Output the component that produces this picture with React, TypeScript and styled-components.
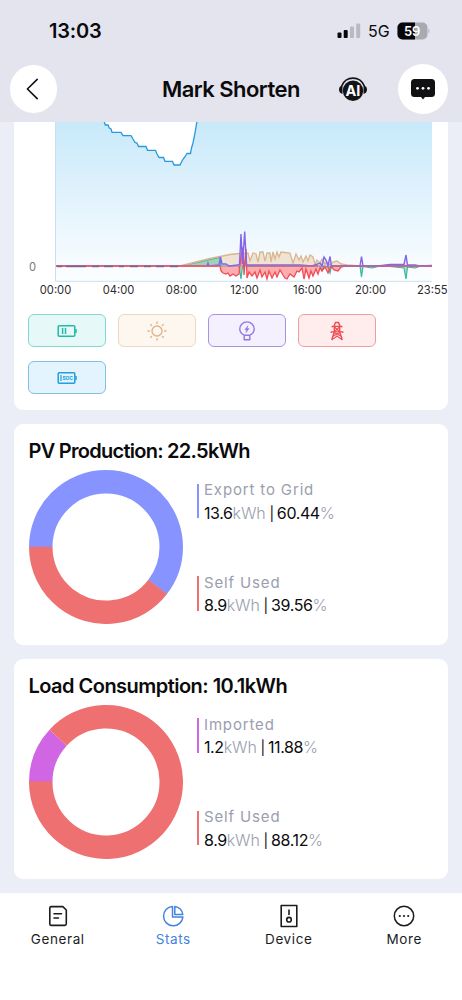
import React from "react";
import styled, { createGlobalStyle } from "styled-components";

const GlobalStyle = createGlobalStyle`
  * { box-sizing: border-box; }
  body {
    margin: 0;
    background: #ebeef6;
    font-family: Inter, "Liberation Sans", sans-serif;
    color: #0b0b0d;
  }
`;

const Screen = styled.div`
  width: 462px;
  height: 1000px;
  display: flex;
  flex-direction: column;
  overflow: hidden;
  background: #ebeef7;
`;

const TopArea = styled.header`
  height: 122px;
  flex: none;
  background: #e4e4ee;
`;

const StatusBar = styled.div`
  height: 61px;
  display: flex;
  align-items: center;
  justify-content: space-between;
  padding: 1px 31px 0 49px;
`;

const Clock = styled.span`
  font-size: 20px;
  font-weight: 600;
  letter-spacing: -0.2px;
`;

const StatusIcons = styled.div`
  display: flex;
  align-items: center;
`;

const Network = styled.span`
  font-size: 16px;
  width: 36px;
  padding-left: 7px;
  font-weight: 400;
  letter-spacing: -0.1px;
`;

const NavBar = styled.div`
  height: 56px;
  display: grid;
  grid-template-columns: 48px 1fr 30px 50px;
  align-items: center;
  padding: 0 14px 0 9.5px;
`;

const RoundButton = styled.button<{ $size: number }>`
  width: ${(p) => p.$size}px;
  height: ${(p) => p.$size}px;
  border: 0;
  padding: 0;
  border-radius: 50%;
  background: #fff;
  display: flex;
  align-items: center;
  justify-content: center;
`;

const PageTitle = styled.h1`
  margin: 0;
  padding-left: 104.5px;
  font-size: 22px;
  line-height: 28px;
  font-weight: 600;
  letter-spacing: -0.55px;
  white-space: nowrap;
`;

const Assistant = styled.span`
  display: flex;
  margin-left: -30px;
`;

const Content = styled.main`
  flex: 1;
  min-height: 0;
  padding: 0 14px;
  display: flex;
  flex-direction: column;
  gap: 14px;
`;

const ChartCard = styled.section`
  height: 288px;
  background: #fff;
  border-radius: 0 0 9px 9px;
  flex: none;
`;

const ChartSvg = styled.svg`
  display: block;
`;

const Chips = styled.div`
  display: grid;
  grid-template-columns: repeat(4, 78px);
  gap: 14px 12px;
  padding: 14px 0 0 14.4px;
`;

const Chip = styled.button<{ $line: string; $fill: string }>`
  height: 33px;
  padding: 0;
  border: 1px solid ${(p) => p.$line};
  background: ${(p) => p.$fill};
  border-radius: 6px;
  display: flex;
  align-items: center;
  justify-content: center;
`;

const Card = styled.section`
  height: 220.5px;
  flex: none;
  background: #fff;
  border-radius: 9px;
  padding: 14px 14px 0 14.5px;
`;

const CardTitle = styled.h2<{ $spacing: number }>`
  margin: 0;
  font-size: 20px;
  line-height: 27px;
  font-weight: 600;
  letter-spacing: ${(p) => p.$spacing}px;
  white-space: nowrap;
`;

const CardBody = styled.div`
  display: flex;
  margin-top: 5.4px;
`;

const Legend = styled.div`
  display: flex;
  flex-direction: column;
  gap: 58px;
  margin: 13.5px 0 0 14px;
`;

const LegendItem = styled.div<{ $color: string }>`
  height: 34.5px;
  border-left: 2px solid ${(p) => p.$color};
  padding-left: 5.5px;
`;

const LegendName = styled.div`
  margin-top: -3.5px;
  font-size: 15px;
  line-height: 20px;
  letter-spacing: 0.85px;
  color: #9a9eae;
  font-weight: 400;
  white-space: nowrap;
`;

const LegendValue = styled.div`
  margin-top: 1.2px;
  font-size: 16px;
  line-height: 22px;
  letter-spacing: -0.4px;
  white-space: nowrap;
  color: #0b0b0d;
`;

const Unit = styled.span`
  color: #9a9eae;
  font-weight: 350;
  letter-spacing: -0.1px;
`;

const Divider = styled.span`
  padding: 0 3.2px 0 3.8px;
  font-size: 14px;
`;

const TabBar = styled.nav`
  height: 107px;
  flex: none;
  background: #fff;
  display: grid;
  grid-template-columns: repeat(4, 1fr);
`;

const Tab = styled.a<{ $active?: boolean }>`
  display: flex;
  flex-direction: column;
  align-items: center;
  padding-top: 11px;
  color: ${(p) => (p.$active ? "#4682e0" : "#1c1c1f")};
`;

const TabLabel = styled.span`
  margin-top: 2px;
  font-size: 13.5px;
  line-height: 18px;
  letter-spacing: 0.6px;
`;

const SOC_LINE =
  "M104 121L105.3 125H108L109.3 128L111 129L112 132.3H121L123 135.7H131L133 139L135 142.5L137 143L138.5 146.5H146L147.5 150.3H155.5L157 154L159 157.5H163.5L165 161.3H172.5L174 165H180L182 161L184 158L185.5 156L187 153.5H190.5L191.5 148L193 143L195 133L197 121";

const PV_LINE =
  "M56 266H180L190 263.5L200 261L210 258.5L220 256.5L230 254.5L239 253.5H246L248 253L250 261L253 253L256 254L258 262L260 252L263 252L265 261L267 253L270 253L271 262L273 252L275 259L277 252L279 257L281 252L290 253L293 263L296 254L299 260L301 256L303 262L306 256L308 261L310 255L313 257L315 264L317 260L320 263L322 259L325 264L327 262L330 265L333 262L337 261L341 264L347 265L360 266H432";

const GRID_LINE =
  "M56 266H220L221 271L223 273L226 274L228 273L230 276L233 274L236 276L239 274L241 256L243 247L244 275L246 249L247 278L249 272L252 276L255 272L257 278L260 270L262 277L265 272L267 279L269 271L272 278L275 272L277 277L280 270L283 275L285 278L287 279L290 274L294 277L297 271L299 272L302 268L304 279L306 269L309 278L311 271L313 276L316 269L318 274L320 268L322 271L325 267L328 273L331 266L334 270L338 271L341 267L345 266H432";

const LOAD_LINE =
  "M56 266.3H207L208 263L209 266L219 265L220.5 257L222 264L226 264L229 266L238 265L239.5 264L241 234L242.5 264L244.7 231.5L246.5 265H270L300 265L312 266L320 263L322 266L324 257L326 260L328 266L330 256.5L331.5 266H360L361.5 256.5L363 265.5L378 266L390 264.5H404L406 255L407.5 265H415L420 266L432 265.5";

const BATTERY_LINE =
  "M56 266H180L190 264L200 262L210 259.5L220 257.5L221 266H239L241 279L242.5 266H300L320 266L322 271L324 266L328 267L330 273L331.5 266H360L361.5 277L363 266.5L372 268L378 266.5L390 266.5L404 268L406 279L407.5 267L415 268L421 266H432";

const TIMES = [
  { x: 55.5, label: "00:00" },
  { x: 118.5, label: "04:00" },
  { x: 181.5, label: "08:00" },
  { x: 244.5, label: "12:00" },
  { x: 307.5, label: "16:00" },
  { x: 370.5, label: "20:00" },
  { x: 432.3, label: "23:55" },
];

function PowerChart() {
  return (
    <ChartSvg width="434" height="178" viewBox="14 122 434 178">
      <defs>
        <linearGradient id="soc" x1="0" y1="122" x2="0" y2="281" gradientUnits="userSpaceOnUse">
          <stop offset="0" stopColor="#c8e9fa" />
          <stop offset="0.6" stopColor="#e8f5fd" />
          <stop offset="1" stopColor="#fcfeff" />
        </linearGradient>
      </defs>
      <rect x="55.5" y="121" width="376.5" height="160" fill="url(#soc)" />
      <path d={SOC_LINE + "Z"} fill="#fff" />
      <path d={SOC_LINE} fill="none" stroke="#2999dc" strokeWidth="1.3" />
      <path d="M55.5 121V281.3H432" fill="none" stroke="#cbdfee" />
      <path d={PV_LINE + "V266Z"} fill="#ead3b4" fillOpacity="0.6" />
      <path d={BATTERY_LINE} fill="#43ba9c" fillOpacity="0.45" stroke="#35b99f" strokeWidth="1.2" />
      <path d={PV_LINE} fill="none" stroke="#d9b68e" strokeWidth="1.3" />
      <path d={GRID_LINE} fill="#ff6565" fillOpacity="0.52" stroke="#f24c55" strokeWidth="1.3" />
      <path d={LOAD_LINE} fill="#8f68f2" fillOpacity="0.12" stroke="#8266ea" strokeWidth="1.4" />
      <path d="M56 266.2H218" stroke="#f0616c" strokeWidth="1.4" />
      <path d="M57 266.4H62M66 266.4H86M92 266.4H99M104 266.4H113M119 266.4H124M130 266.4H138M144 266.4H151M156 266.4H164M170 266.4H178" stroke="#81658f" strokeWidth="1.8" />
      <path d="M246 266H318M333 266H432" stroke="#bb6795" strokeWidth="1.3" />
      <g fontFamily="Inter, sans-serif" fontSize="11.2" fill="#2b2b2e" textAnchor="middle">
        <text x="32.5" y="270.5" fill="#777">0</text>
        {TIMES.map((t) => (
          <text key={t.label} x={t.x} y="293.5">{t.label}</text>
        ))}
      </g>
    </ChartSvg>
  );
}

function BatteryIcon() {
  return (
    <svg width="20" height="14" viewBox="0 0 20 14" fill="none" stroke="#22bba3" strokeWidth="1.5">
      <rect x="1.2" y="1.7" width="16.6" height="10.6" rx="1" />
      <path d="M19 5V9" strokeWidth="1.5" />
      <path d="M5.6 4V10M8.5 4V10" />
    </svg>
  );
}

function SunIcon() {
  return (
    <svg width="20" height="20" viewBox="0 0 20 20" fill="none" stroke="#dfb48c" strokeWidth="1.4" strokeLinecap="round">
      <circle cx="10" cy="10" r="5" />
      <path d="M10 1V2.4M10 17.6V19M1 10H2.4M17.6 10H19M3.7 3.7L4.6 4.6M15.4 15.4L16.3 16.3M3.7 16.3L4.6 15.4M15.4 4.6L16.3 3.7" />
    </svg>
  );
}

function BulbIcon() {
  return (
    <svg width="18" height="20" viewBox="0 0 18 20" fill="none" stroke="#9079dc" strokeWidth="1.4" strokeLinejoin="round">
      <path d="M6.2 14.2C3.4 13 1.8 10.7 1.8 8.1A7.2 7.2 0 0 1 16.2 8.1C16.2 10.7 14.6 13 11.8 14.2Z" />
      <path d="M6.2 14.5V18.7H11.8V14.5" />
      <path d="M9.8 4.7L6.8 8.8H8.5L8 11.7L11.1 7.6H9.3Z" fill="#9079dc" strokeWidth="0.4" />
    </svg>
  );
}

function TowerIcon() {
  return (
    <svg width="14" height="20" viewBox="0 0 14 20" fill="none" stroke="#ee4b52" strokeWidth="1.5">
      <path d="M4.4 4L5.6 1.4H8.4L9.6 4V10.5L12.2 19M4.4 4V10.5L1.8 19" />
      <path d="M2.2 6.5V5.4H11.8V6.5M1.2 12V10.8H12.8V12" strokeWidth="1.2" />
      <path d="M4.6 6L9.4 10.6M9.4 6L4.6 10.6M4.2 11.4L10.8 15M9.8 11.4L3.2 15M2.2 18.6L7 15L11.8 18.6" strokeWidth="1.1" />
    </svg>
  );
}

function SocIcon() {
  return (
    <svg width="20" height="14" viewBox="0 0 20 14" fill="none" stroke="#209fdd" strokeWidth="1.5">
      <rect x="1.2" y="1.7" width="16.6" height="10.6" rx="1" />
      <path d="M19 5V9" strokeWidth="1.5" />
      <path d="M4 4V10" strokeWidth="1.2" />
      <text x="5.4" y="8.9" fontSize="5" fontWeight="700" letterSpacing="-0.15" fontFamily="Inter, sans-serif" fill="#209fdd" stroke="none">SOC</text>
    </svg>
  );
}

type Slice = { name: string; color: string; value: string; share: number };

function Donut({ slices }: { slices: Slice[] }) {
  const r = 65.25;
  const c = 2 * Math.PI * r;
  let start = 0;
  return (
    <svg width="154" height="154" viewBox="0 0 154 154">
      {slices.map((s) => {
        const angle = 180 + start * 3.6;
        start += s.share;
        return (
          <circle
            key={s.name}
            cx="77"
            cy="77"
            r={r}
            fill="none"
            stroke={s.color}
            strokeWidth="23.5"
            strokeDasharray={`${(c * s.share) / 100} ${c}`}
            transform={`rotate(${angle} 77 77)`}
          />
        );
      })}
    </svg>
  );
}

function EnergyCard({ title, spacing, slices }: { title: string; spacing: number; slices: Slice[] }) {
  return (
    <Card>
      <CardTitle $spacing={spacing}>{title}</CardTitle>
      <CardBody>
        <Donut slices={slices} />
        <Legend>
          {slices.map((s) => (
            <LegendItem key={s.name} $color={s.color}>
              <LegendName>{s.name}</LegendName>
              <LegendValue>
                {s.value}<Unit>kWh</Unit><Divider>|</Divider>{s.share.toFixed(2)}<Unit>%</Unit>
              </LegendValue>
            </LegendItem>
          ))}
        </Legend>
      </CardBody>
    </Card>
  );
}

const PRODUCTION: Slice[] = [
  { name: "Export to Grid", color: "#8794ff", value: "13.6", share: 60.44 },
  { name: "Self Used", color: "#ef7070", value: "8.9", share: 39.56 },
];

const CONSUMPTION: Slice[] = [
  { name: "Imported", color: "#d166e4", value: "1.2", share: 11.88 },
  { name: "Self Used", color: "#ef7070", value: "8.9", share: 88.12 },
];

export default function App() {
  return (
    <>
      <GlobalStyle />
      <Screen>
        <TopArea>
          <StatusBar>
            <Clock>13:03</Clock>
            <StatusIcons>
              <svg width="24" height="16" viewBox="0 0 24 16">
                <rect x="0.5" y="9.5" width="4" height="5.5" rx="1" fill="#08080a" />
                <rect x="6.7" y="7" width="4" height="8" rx="1" fill="#08080a" />
                <rect x="13" y="3.5" width="4" height="11.5" rx="1" fill="#b9b9c2" />
                <rect x="19.2" y="0.5" width="4" height="14.5" rx="1" fill="#b9b9c2" />
              </svg>
              <Network>5G</Network>
              <svg width="34" height="18" viewBox="0 0 34 18">
                <defs>
                  <clipPath id="level"><rect width="18" height="18" /></clipPath>
                </defs>
                <rect x="0.5" y="0.5" width="30" height="17" rx="5" fill="#a9a9b1" />
                <rect x="0.5" y="0.5" width="30" height="17" rx="5" fill="#08080a" clipPath="url(#level)" />
                <path d="M31.5 6.5Q33.5 9 31.5 11.5Z" fill="#a9a9b1" />
                <text x="15.2" y="13.5" textAnchor="middle" fontSize="13" fontWeight="600" fontFamily="Inter, sans-serif" fill="#fff">59</text>
              </svg>
            </StatusIcons>
          </StatusBar>
          <NavBar>
            <RoundButton $size={47.5} aria-label="Back">
              <svg width="14" height="24" viewBox="0 0 14 24" fill="none" stroke="#111" strokeWidth="1.6" strokeLinecap="round" strokeLinejoin="round">
                <path d="M11.2 2.4L1.4 12L11.2 21.6" />
              </svg>
            </RoundButton>
            <PageTitle>Mark Shorten</PageTitle>
            <Assistant>
              <svg width="30" height="26" viewBox="0 0 30 26">
                <path d="M3.7 10A12 12 0 0 1 26.3 10" fill="none" stroke="#141416" strokeWidth="1.7" />
                <path d="M4.5 9.5Q1 10 1 13.5T4.5 18ZM25.5 9.5Q29 10 29 13.5T25.5 18Z" fill="#141416" />
                <circle cx="15" cy="14.7" r="10.2" fill="#141416" />
                <text x="15" y="20" fontFamily="Inter, sans-serif" fontSize="14.5" fontWeight="700" fill="#fff" textAnchor="middle">AI</text>
              </svg>
            </Assistant>
            <RoundButton $size={50} aria-label="Messages">
              <svg width="26" height="24" viewBox="0 0 26 24">
                <path d="M4.5 2H21.5Q25 2 25 5.5V16.5Q25 20 21.5 20H15L13 22.5L11 20H4.5Q1 20 1 16.5V5.5Q1 2 4.5 2Z" fill="#111113" />
                <circle cx="7.5" cy="11.3" r="1.4" fill="#fff" />
                <circle cx="13" cy="11.3" r="1.4" fill="#fff" />
                <circle cx="18.5" cy="11.3" r="1.4" fill="#fff" />
              </svg>
            </RoundButton>
          </NavBar>
        </TopArea>
        <Content>
          <ChartCard>
            <PowerChart />
            <Chips>
              <Chip $line="#83d8ce" $fill="#e6f9f8"><BatteryIcon /></Chip>
              <Chip $line="#ecd8c4" $fill="#fdf7ef"><SunIcon /></Chip>
              <Chip $line="#a794e1" $fill="#f4f0fe"><BulbIcon /></Chip>
              <Chip $line="#f19ca1" $fill="#ffeced"><TowerIcon /></Chip>
              <Chip $line="#7fc0e3" $fill="#e3f4fe"><SocIcon /></Chip>
            </Chips>
          </ChartCard>
          <EnergyCard title="PV Production: 22.5kWh" spacing={-0.73} slices={PRODUCTION} />
          <EnergyCard title="Load Consumption: 10.1kWh" spacing={-0.53} slices={CONSUMPTION} />
        </Content>
        <TabBar>
          <Tab>
            <svg width="24" height="24" viewBox="0 0 24 24" fill="none" stroke="currentColor" strokeWidth="1.6" strokeLinecap="round" strokeLinejoin="round">
              <path d="M5.2 2.6H16.8L20.3 6V19.8Q20.3 21.4 18.7 21.4H5.2Q3.8 21.4 3.8 20V4Q3.8 2.6 5.2 2.6ZM8 9.7H15.5M8 14H12.5" />
            </svg>
            <TabLabel>General</TabLabel>
          </Tab>
          <Tab $active>
            <svg width="24" height="24" viewBox="0 0 24 24" fill="none" stroke="currentColor" strokeWidth="1.5" strokeLinejoin="round">
              <path d="M11.5 2.4A9.7 9.7 0 1 0 21.9 13H11.5Z" />
              <path d="M13.8 2.5V10.5H21.8A9 9 0 0 0 13.8 2.5Z" />
            </svg>
            <TabLabel>Stats</TabLabel>
          </Tab>
          <Tab>
            <svg width="24" height="24" viewBox="0 0 24 24" fill="none" stroke="currentColor" strokeWidth="1.6" strokeLinejoin="round">
              <rect x="4.2" y="1.5" width="15.6" height="21" />
              <path d="M12 5.5V11" />
              <circle cx="12" cy="15.7" r="2.3" />
            </svg>
            <TabLabel>Device</TabLabel>
          </Tab>
          <Tab>
            <svg width="24" height="24" viewBox="0 0 24 24" fill="none" stroke="currentColor" strokeWidth="1.5">
              <circle cx="12" cy="12" r="9.7" />
              <g fill="currentColor" stroke="none">
                <circle cx="7.8" cy="12" r="1.1" />
                <circle cx="12" cy="12" r="1.1" />
                <circle cx="16.2" cy="12" r="1.1" />
              </g>
            </svg>
            <TabLabel>More</TabLabel>
          </Tab>
        </TabBar>
      </Screen>
    </>
  );
}
